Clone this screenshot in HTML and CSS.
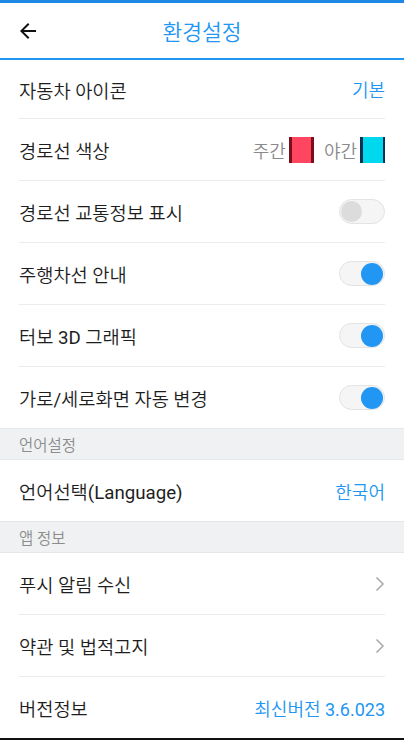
FILE: index.html
```html
<!DOCTYPE html>
<html lang="ko">
<head>
<meta charset="utf-8">
<title>환경설정</title>
<link rel="stylesheet" href="styles.css">
</head>
<body>
<div class="screen">
  <div class="topbar"></div>
  <header class="header">
    <button class="back" aria-label="뒤로">
      <svg width="24" height="24" viewBox="0 0 24 24"><path d="M20 11H7.83l5.59-5.59L12 4l-8 8 8 8 1.41-1.41L7.83 13H20v-2z" fill="#111"/></svg>
    </button>
    <h1 class="title">환경설정</h1>
  </header>
  <main class="list">
    <div class="row first"><span class="label">자동차 아이콘</span><span class="value">기본</span></div>
    <div class="row"><span class="label">경로선 색상</span>
      <span class="colors">
        <span class="cname">주간</span><span class="swatch day"></span>
        <span class="cname">야간</span><span class="swatch night"></span>
      </span>
    </div>
    <div class="row"><span class="label">경로선 교통정보 표시</span><span class="toggle"><span class="knob"></span></span></div>
    <div class="row"><span class="label">주행차선 안내</span><span class="toggle on"><span class="knob"></span></span></div>
    <div class="row"><span class="label">터보 <span class="latin">3D</span> 그래픽</span><span class="toggle on"><span class="knob"></span></span></div>
    <div class="row last"><span class="label">가로<span class="latin">/</span>세로화면 자동 변경</span><span class="toggle on"><span class="knob"></span></span></div>
    <div class="section">언어설정</div>
    <div class="row last"><span class="label">언어선택<span class="latin">(Language)</span></span><span class="value">한국어</span></div>
    <div class="section">앱 정보</div>
    <div class="row"><span class="label">푸시 알림 수신</span><svg class="chev" width="10" height="16" viewBox="0 0 10 16"><path d="M1.5 1.5 8 8l-6.5 6.5" fill="none" stroke="#a8a8a8" stroke-width="1.5"/></svg></div>
    <div class="row"><span class="label">약관 및 법적고지</span><svg class="chev" width="10" height="16" viewBox="0 0 10 16"><path d="M1.5 1.5 8 8l-6.5 6.5" fill="none" stroke="#a8a8a8" stroke-width="1.5"/></svg></div>
    <div class="row last"><span class="label">버전정보</span><span class="value">최신버전 <span class="latin">3.6.023</span></span></div>
  </main>
  <div class="bottombar"></div>
</div>
</body>
</html>
```
FILE: styles.css
```css
* { box-sizing: border-box; }
html, body { margin: 0; padding: 0; background: #fff; }
body {
  font-family: Roboto, "Noto Sans CJK KR", sans-serif;
  color: #222;
  font-weight: 350;
}
.latin { font-weight: 400; }
.screen {
  width: 404px;
  height: 740px;
  display: flex;
  flex-direction: column;
  overflow: hidden;
}
.topbar { height: 3px; background: #1e88e5; flex: none; }
.header {
  height: 57px;
  flex: none;
  border-bottom: 2px solid #2196f3;
  display: flex;
  align-items: center;
  position: relative;
}
.back {
  border: 0;
  background: none;
  padding: 0;
  margin-left: 16px;
  width: 24px;
  height: 24px;
  display: flex;
}
.title {
  position: absolute;
  left: 0; right: 0;
  text-align: center;
  margin: 0;
  font-size: 21.5px;
  font-weight: 350;
  color: #2196f3;
  pointer-events: none;
}
.list { flex: 1; display: flex; flex-direction: column; }
.row {
  height: 62px;
  margin: 0 19px;
  border-bottom: 1px solid #ececec;
  display: flex;
  align-items: center;
  justify-content: space-between;
  flex: none;
}
.row.first { height: 59px; }
.row.last { border-bottom: 0; height: 61px; }
.label { font-size: 18.7px; color: #1e1e1e; }
.value { font-size: 18px; color: #2196f3; }
.colors { display: flex; align-items: center; }
.cname { font-size: 18px; color: #8a8a8a; margin-right: 3px; }
.cname + .swatch + .cname { margin-left: 10px; }
.swatch {
  width: 25px;
  height: 26px;
  display: inline-block;
}
.swatch.day { background: #ff4560; border-left: 3px solid #7a0f1c; border-right: 3px solid #7a0f1c; }
.swatch.night { background: #00d8ee; border-left: 3px solid #0d3050; border-right: 2px solid #0d3050; }
.toggle {
  width: 46px;
  height: 25px;
  border-radius: 13px;
  background: #f5f5f5;
  border: 1px solid #e3e3e3;
  display: flex;
  align-items: center;
  padding: 0 1px;
}
.knob {
  width: 21px;
  height: 21px;
  border-radius: 50%;
  background: #dcdcdc;
}
.toggle.on { justify-content: flex-end; }
.toggle.on .knob { background: #2196f3; width: 22px; height: 22px; }
.section {
  height: 32px;
  flex: none;
  background: #eff1f2;
  border-top: 1px solid #e4e6e8;
  border-bottom: 1px solid #e4e6e8;
  padding-left: 19px;
  display: flex;
  align-items: center;
  font-size: 15.5px;
  color: #8c8c8c;
}
.chev { margin-right: 0; }
.bottombar { height: 3px; background: #111; flex: none; margin-top: auto; }
```
